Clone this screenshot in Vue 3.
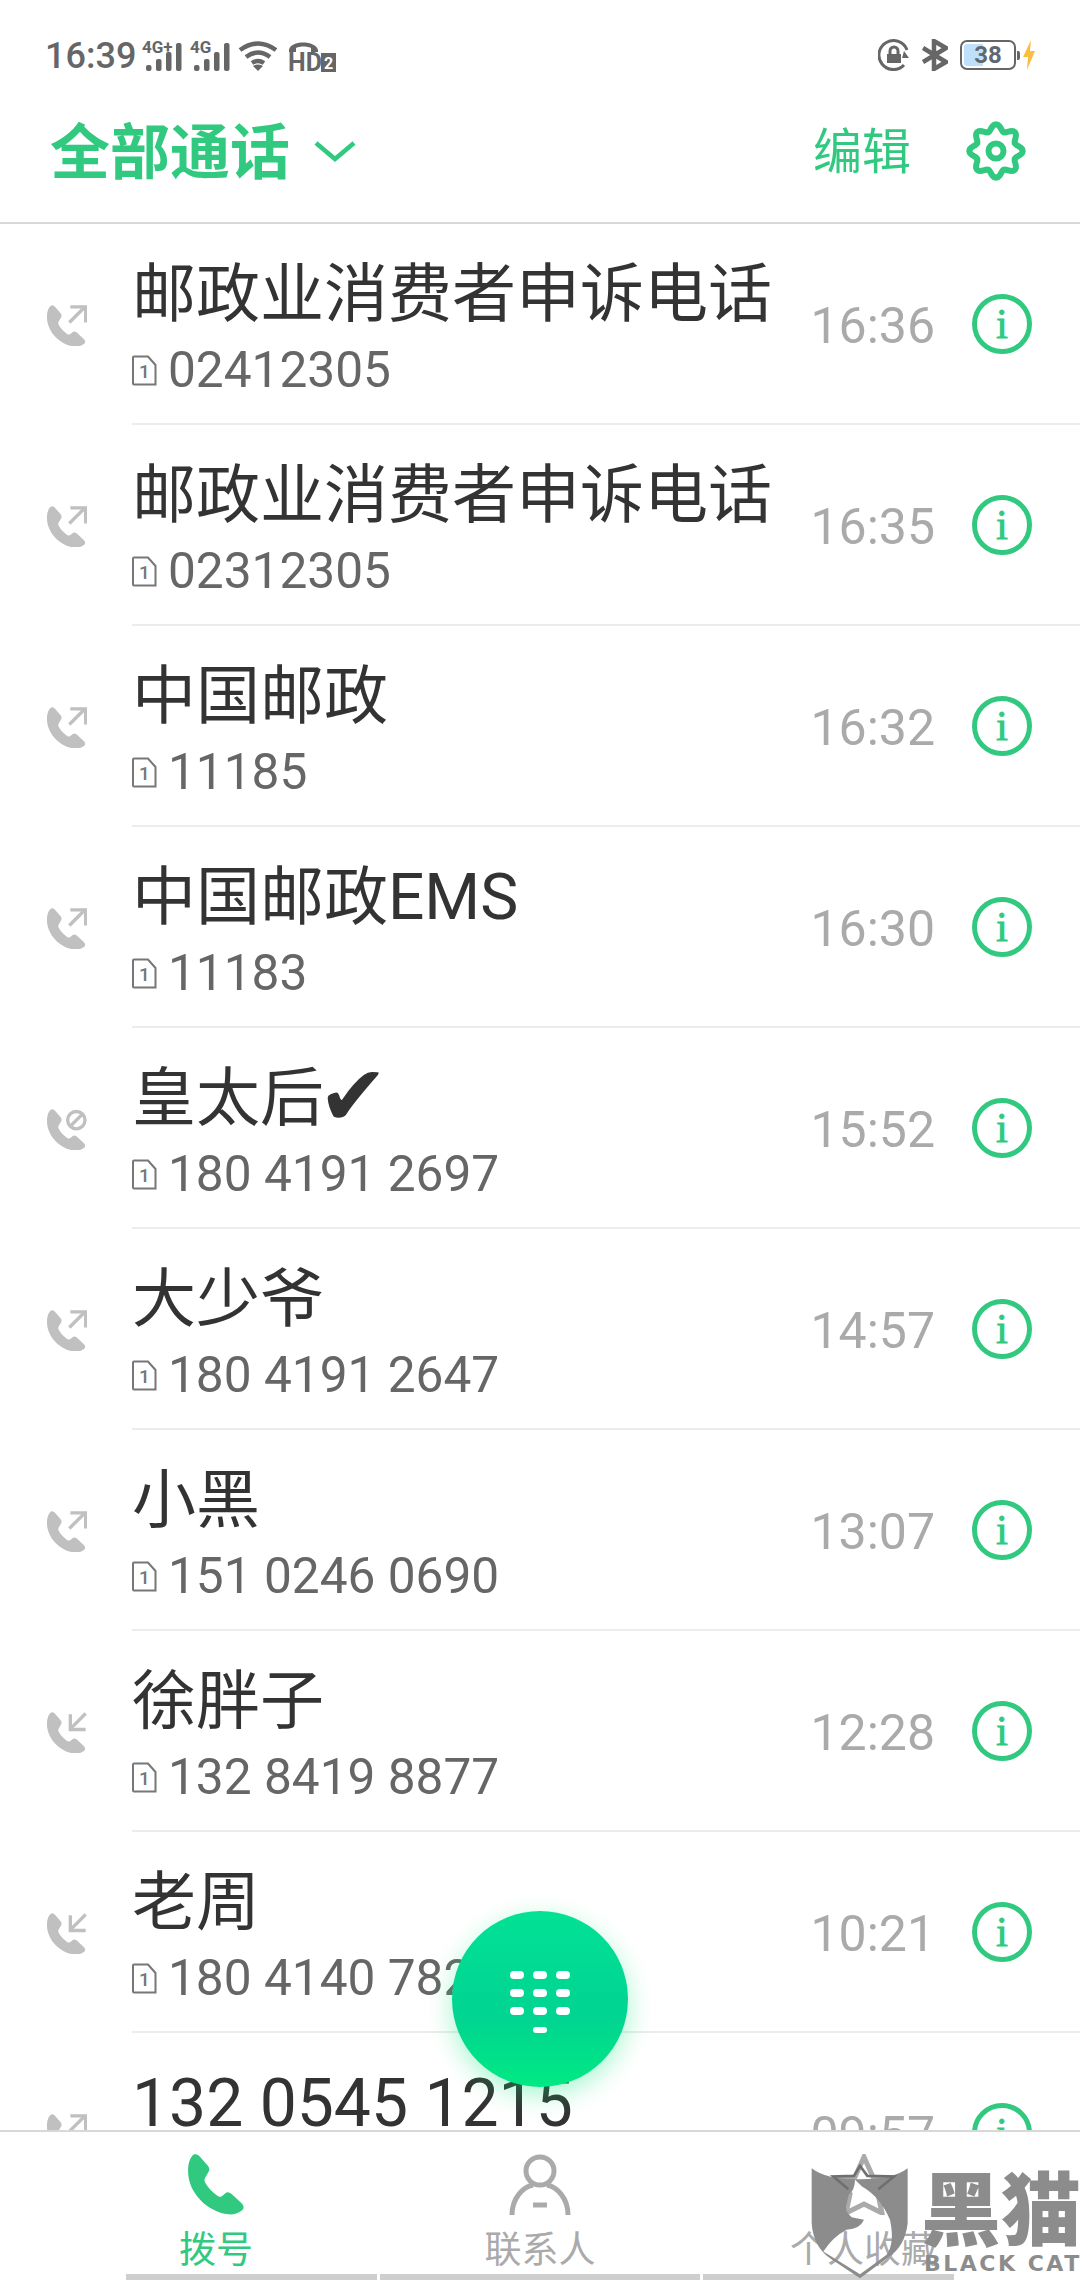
<template>
  <div class="phone">
    <div class="status">
      <div class="status-side">
        <span class="clock">16:39</span>
        <svg v-for="s in signals" :key="s" class="signal" viewBox="0 0 40 32" width="40" height="32">
          <text x="0" y="13" class="sig-text">{{ s }}</text>
          <rect x="4" y="25" width="5.5" height="6" rx="2" />
          <rect x="14" y="19" width="5.5" height="12" rx="2" />
          <rect x="24" y="12" width="5.5" height="19" rx="2" />
          <rect x="34" y="3" width="5.5" height="28" rx="2" />
        </svg>
        <svg class="wifi" viewBox="0 0 40 30" width="40" height="30">
          <path d="M2 9 Q20 -4 38 9" />
          <path d="M8 16 Q20 7 32 16" />
          <path d="M14 22 Q20 18 26 22" />
          <path class="solid" d="M20 30 L15 25 Q20 22 25 25 Z" />
        </svg>
        <svg class="hd" viewBox="0 0 48 32" width="48" height="32">
          <path class="solid" d="M1 10 C2 0 28 0 30 10 L30 12 L23 12 L23 8 C19 6 12 6 8 8 L8 12 L1 12 Z" />
          <text x="0" y="31" class="hd-text">HD</text>
          <rect class="solid" x="33" y="13" width="15" height="19" />
          <text x="36" y="29" class="hd-two">2</text>
        </svg>
      </div>
      <div class="status-side right">
        <svg viewBox="0 0 32 32" width="32" height="32">
          <path class="thin" d="M26 26 A14.5 14.5 0 1 1 29 11" />
          <path class="solid" d="M26 12 L31 19 L24 19 Z" />
          <path class="solid" d="M9 15 H23 V24 H9 Z" />
          <path class="thin" d="M12 15 V12 A4 4 0 0 1 20 12 V15" />
        </svg>
        <svg viewBox="0 0 26 32" width="26" height="32">
          <path class="bt" d="M1 9 L24 23 L12 30 V2 L24 9 L1 23" />
        </svg>
        <div class="battery">
          <div class="battery-box">
            <div class="battery-fill"></div>
            <span class="battery-num">38</span>
          </div>
          <div class="battery-tip"></div>
          <svg viewBox="0 0 12 30" width="12" height="30">
            <path d="M8 0 L0 17 H5 L4 30 L12 11 H7 Z" fill="#fbbd42" />
          </svg>
        </div>
      </div>
    </div>

    <div class="title-bar">
      <div class="title-left">
        <span class="title">全部通话</span>
        <svg viewBox="0 0 42 22" width="42" height="22">
          <path class="chev" d="M2 3 L21 19 L40 3" />
        </svg>
      </div>
      <div class="title-right">
        <span class="edit">编辑</span>
        <svg viewBox="0 0 60 60" width="60" height="60">
          <path class="gear" :d="gearPath" />
          <circle class="gear" cx="30" cy="30" r="7.5" />
        </svg>
      </div>
    </div>

    <div class="list">
      <div v-for="c in calls" :key="c.time" class="row">
        <div class="call-icon">
          <svg viewBox="0 0 120 122" width="40" height="41">
            <path class="handset" transform="scale(0.72)" :d="phonePath" />
            <template v-if="c.type === 'out'">
              <path class="arrow" d="M67 52 L112 7" />
              <path class="arrow" d="M70 5 H116 V52" />
            </template>
            <template v-else-if="c.type === 'in'">
              <path class="arrow" d="M70 50 L116 4" />
              <path class="arrow" d="M70 6 V52 H116" />
            </template>
            <template v-else>
              <circle class="arrow" cx="88" cy="33" r="26" />
              <path class="arrow" d="M72 49 L104 17" />
            </template>
          </svg>
        </div>
        <div class="row-body">
          <div class="row-text">
            <div class="name" :class="{ big: !c.number }">{{ c.name }}<span v-if="c.tick" class="tick">✔</span></div>
            <div v-if="c.number" class="number">
              <svg viewBox="0 0 25 31" width="25" height="31">
                <path class="sim" d="M2 1.5 H16 L23.5 10 V29.5 H2 Q1 29.5 1 28.5 V2.5 Q1 1.5 2 1.5 Z" />
                <text x="12.5" y="23" class="sim-text">1</text>
              </svg>
              <span>{{ c.number }}</span>
            </div>
          </div>
          <span class="time">{{ c.time }}</span>
          <span class="info">i</span>
        </div>
      </div>
    </div>

    <div class="tabs">
      <div class="tab-row">
        <div class="tab active">
          <svg viewBox="0 0 160 175" width="56" height="61">
            <path fill="#31c97f" :d="phonePath" />
          </svg>
          <span>拨号</span>
        </div>
        <div class="tab">
          <svg viewBox="0 0 62 61" width="62" height="61">
            <circle class="tab-line" cx="31" cy="17" r="14" />
            <path class="tab-line" d="M3 61 C3 44 14 33 24 31 M38 31 C48 33 59 44 59 61" />
            <path class="tab-line" d="M24 51 H38" />
          </svg>
          <span>联系人</span>
        </div>
        <div class="tab">
          <svg viewBox="0 0 62 61" width="62" height="61">
            <path class="tab-line" d="M31 3 L40 23 L60 26 L45 40 L49 59 L31 50 L13 59 L17 40 L2 26 L22 23 Z" />
          </svg>
          <span>个人收藏</span>
        </div>
      </div>
      <div class="strip">
        <i class="seg short"></i>
        <i class="seg wide"></i>
        <i class="seg short"></i>
      </div>
    </div>

    <div class="fab">
      <i v-for="n in 10" :key="n" :class="{ last: n === 10 }"></i>
    </div>

    <div class="mark">
      <svg viewBox="90 40 300 380" width="100" height="127">
        <path
          fill="#8c8c8c"
          fill-rule="evenodd"
          d="M95 85 Q140 120 240 118 Q340 118 383 85 L383 250 Q375 320 325 352 L240 415 L150 355 Q100 320 95 250 Z
             M225 120 L246 140 Q300 170 330 240 Q345 310 320 345 L240 403 L130 335 Q160 290 200 270 Q240 268 252 240 L215 232 Q195 215 198 200 L206 165 Q225 150 225 120 Z"
        />
        <path class="star" d="M205 148 L160 110 L222 108 L240 78 L262 108 L342 110 L295 148" />
      </svg>
      <div class="mark-text">
        <span class="mark-cn">黑猫</span>
        <span class="mark-en">BLACK CAT</span>
      </div>
    </div>
  </div>
</template>

<script setup>
const signals = ['4G+', '4G']

const phonePath =
  'M18 1 C24 -1 30 3 34 8 L56 33 C62 40 62 46 58 52 L50 66 C46 72 46 78 50 84 C58 98 70 110 84 120 C90 124 95 123 100 118 L106 113 C112 108 118 110 124 114 L152 140 C160 147 162 156 154 162 C142 170 128 175 116 173 C54 166 0 110 0 50 C-1 30 6 6 18 1 Z'

// wavy ring with 8 lobes
const gearPts = []
for (let i = 0; i < 96; i++) {
  const a = (i / 96) * Math.PI * 2
  const r = 23.5 + 3.2 * Math.cos(8 * a)
  gearPts.push(`${(30 + r * Math.sin(a)).toFixed(2)} ${(30 - r * Math.cos(a)).toFixed(2)}`)
}
const gearPath = 'M' + gearPts.join(' L') + ' Z'

const calls = [
  { name: '邮政业消费者申诉电话', number: '02412305', time: '16:36', type: 'out' },
  { name: '邮政业消费者申诉电话', number: '02312305', time: '16:35', type: 'out' },
  { name: '中国邮政', number: '11185', time: '16:32', type: 'out' },
  { name: '中国邮政EMS', number: '11183', time: '16:30', type: 'out' },
  { name: '皇太后', tick: true, number: '180 4191 2697', time: '15:52', type: 'blocked' },
  { name: '大少爷', number: '180 4191 2647', time: '14:57', type: 'out' },
  { name: '小黑', number: '151 0246 0690', time: '13:07', type: 'out' },
  { name: '徐胖子', number: '132 8419 8877', time: '12:28', type: 'in' },
  { name: '老周', number: '180 4140 7821', time: '10:21', type: 'in' },
  { name: '132 0545 1215', number: '', time: '09:57', type: 'out' }
]
</script>

<style>
html, body { background: #fff; }
</style>

<style scoped>
.phone {
  position: relative;
  width: 1080px;
  height: 2280px;
  overflow: hidden;
  display: flex;
  flex-direction: column;
  background: #fff;
  font-family: Roboto, "Noto Sans CJK SC", "DejaVu Sans", sans-serif;
}

.status {
  height: 80px;
  flex-shrink: 0;
  box-sizing: border-box;
  padding: 38px 45px 0;
  display: flex;
  justify-content: space-between;
  align-items: flex-start;
}
.status-side { display: flex; align-items: center; height: 36px; gap: 8px; }
.status-side.right { gap: 12px; margin-top: -1px; }
.clock { font-size: 36px; font-weight: 500; color: #666; line-height: 36px; margin-right: -2px; }
.signal, .hd { overflow: visible; }
.signal rect { fill: #666; }
.sig-text { font: 700 17px Roboto, sans-serif; fill: #666; }
.wifi path { fill: none; stroke: #666; stroke-width: 4.5; }
.wifi { margin-right: 2px; }
.wifi .solid, .hd .solid, svg .solid { fill: #666; stroke: none; }
.hd-text { font: 700 25px Roboto, sans-serif; fill: #666; }
.hd-two { font: 700 16px Roboto, sans-serif; fill: #fff; }
.thin { fill: none; stroke: #666; stroke-width: 3; }
.bt { fill: none; stroke: #666; stroke-width: 4.5; }
.battery { display: flex; align-items: center; }
.battery-box {
  position: relative;
  width: 56px;
  height: 30px;
  box-sizing: border-box;
  border: 2.5px solid #666;
  border-radius: 7px;
  display: flex;
  align-items: center;
  justify-content: center;
}
.battery-fill {
  position: absolute;
  left: 2px;
  top: 2px;
  bottom: 2px;
  width: 19px;
  background: #bfe0fb;
  border-radius: 3px 0 0 3px;
}
.battery-num { position: relative; font-size: 24px; font-weight: 700; color: #5f6770; }
.battery-tip { width: 3px; height: 9px; background: #666; margin: 0 3px 0 1px; border-radius: 0 2px 2px 0; }

.title-bar {
  height: 144px;
  flex-shrink: 0;
  box-sizing: border-box;
  padding: 0 54px 0 50px;
  border-bottom: 2px solid #d8d8d8;
  display: flex;
  justify-content: space-between;
  align-items: center;
}
.title-left { display: flex; align-items: center; gap: 24px; }
.title { font-size: 60px; font-weight: 700; color: #31c97f; line-height: 70px; margin-top: 6px; }
.chev { fill: none; stroke: #31c97f; stroke-width: 4.5; }
.title-right { display: flex; align-items: center; gap: 55px; }
.edit { font-size: 49px; color: #31c97f; line-height: 60px; margin-top: 3px; }
.gear { fill: none; stroke: #31c97f; stroke-width: 6; }

.list { flex: 1; min-height: 0; overflow: hidden; }
.row { display: flex; height: 201px; }
.call-icon { width: 132px; flex-shrink: 0; box-sizing: border-box; padding: 81px 0 0 47px; }
.handset { fill: #c0c0c0; }
.arrow { fill: none; stroke: #c0c0c0; stroke-width: 10; }
.row-body {
  flex: 1;
  box-sizing: border-box;
  padding-right: 48px;
  border-bottom: 2px solid #ececec;
  display: flex;
  align-items: center;
}
.row-text { flex: 1; align-self: flex-start; padding-top: 33px; }
.name { font-size: 64px; line-height: 76px; color: #333; white-space: nowrap; }
.name.big { font-size: 66px; }
.tick { font-family: "DejaVu Sans", sans-serif; font-size: 84px; line-height: 0; margin-left: -6px; vertical-align: -5px; }
.number {
  display: flex;
  align-items: center;
  gap: 11px;
  margin-top: -1px;
  font-size: 49.6px;
  line-height: 76px;
  color: #666;
  white-space: nowrap;
}
.sim { fill: none; stroke: #777; stroke-width: 2; }
.sim-text { font: 500 19px Roboto, sans-serif; fill: #777; text-anchor: middle; }
.time { font-size: 50px; color: #aaa; margin-top: 4px; }
.info {
  width: 60px;
  height: 60px;
  margin-left: 37px;
  box-sizing: border-box;
  border: 5.5px solid #31c97f;
  border-radius: 50%;
  display: flex;
  align-items: center;
  justify-content: center;
  font-family: "Liberation Serif", serif;
  font-size: 43px;
  -webkit-text-stroke: 0.8px #31c97f;
  color: #31c97f;
  line-height: 1;
}

.tabs {
  height: 150px;
  flex-shrink: 0;
  box-sizing: border-box;
  border-top: 2px solid #d8d8d8;
  background: #fff;
  display: flex;
  flex-direction: column;
  justify-content: space-between;
}
.tab-row { padding: 22px 54px 0; display: grid; grid-template-columns: repeat(3, 1fr); }
.tab { display: flex; flex-direction: column; align-items: center; font-size: 37px; line-height: 46px; color: #aaa; }
.tab span { margin-top: 13px; }
.tab.active { color: #31c97f; }
.tab-line { fill: none; stroke: #aaa; stroke-width: 5; }
.strip { display: flex; justify-content: center; gap: 3px; }
.seg { height: 7px; background: #cfcfcf; }
.seg.short { width: 251px; }
.seg.wide { width: 320px; }

.fab {
  position: absolute;
  left: 452px;
  top: 1911px;
  width: 176px;
  height: 176px;
  box-sizing: border-box;
  padding: 60px 0 0 58px;
  border-radius: 50%;
  background: linear-gradient(180deg, #02e196 0%, #00d491 60%, #00e983 100%);
  box-shadow: 0 8px 26px rgba(0, 230, 120, 0.35);
  display: grid;
  grid-template-columns: repeat(3, 14px);
  grid-auto-rows: 8px;
  gap: 10px 9px;
  align-content: start;
}
.fab i { background: #fff; border-radius: 4px; }
.fab i.last { grid-column: 2; margin-top: 2px; }

.mark {
  position: absolute;
  left: 810px;
  top: 2153px;
  display: flex;
  gap: 14px;
}
.star { fill: none; stroke: #6f6f6f; stroke-width: 8; }
.mark-text { display: flex; flex-direction: column; margin-top: 18px; }
.mark-cn { font-size: 80px; font-weight: 900; line-height: 82px; margin-left: -3px; color: #8c8c8c; white-space: nowrap; }
.mark-en { font-family: "DejaVu Sans", sans-serif; font-size: 22px; font-weight: 700; letter-spacing: 2.5px; line-height: 22px; color: #8c8c8c; white-space: nowrap; }
</style>
